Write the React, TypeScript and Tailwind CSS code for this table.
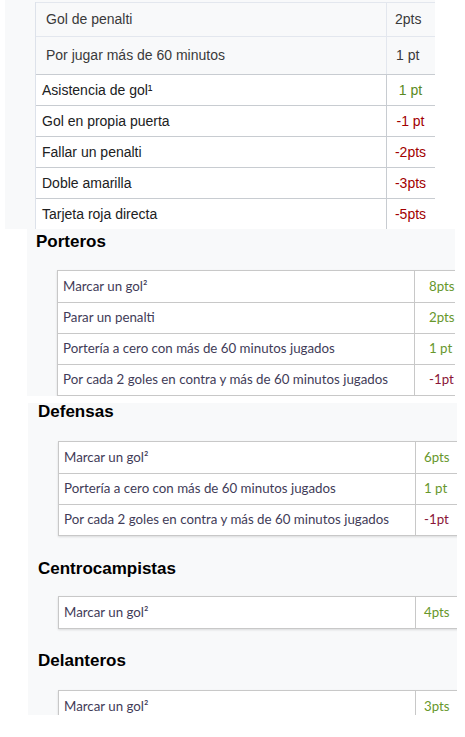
import React from "react";

type Row = { label: React.ReactNode; pts: string; tone?: "plus" | "minus" | "plain" };

const generales: Row[] = [
  { label: "Asistencia de gol¹", pts: "1 pt", tone: "plus" },
  { label: "Gol en propia puerta", pts: "-1 pt", tone: "minus" },
  { label: "Fallar un penalti", pts: "-2pts", tone: "minus" },
  { label: "Doble amarilla", pts: "-3pts", tone: "minus" },
  { label: "Tarjeta roja directa", pts: "-5pts", tone: "minus" },
];

const porteros: Row[] = [
  { label: "Marcar un gol²", pts: "8pts", tone: "plus" },
  { label: "Parar un penalti", pts: "2pts", tone: "plus" },
  { label: "Portería a cero con más de 60 minutos jugados", pts: "1 pt", tone: "plus" },
  { label: "Por cada 2 goles en contra y más de 60 minutos jugados", pts: "-1pt", tone: "minus" },
];

const defensas: Row[] = [
  { label: "Marcar un gol²", pts: "6pts", tone: "plus" },
  { label: "Portería a cero con más de 60 minutos jugados", pts: "1 pt", tone: "plus" },
  { label: "Por cada 2 goles en contra y más de 60 minutos jugados", pts: "-1pt", tone: "minus" },
];

const heading = "text-[17px] leading-[17px] font-bold text-black font-['Liberation_Sans',Arial,sans-serif]";

// Tabla de posiciones (porteros, defensas...)
const PosTable = ({ rows, ptsCol }: { rows: Row[]; ptsCol: string }) => (
  <div className="bg-white border border-[#c8c8c8] shadow-[0_1px_2px_rgba(0,0,0,0.12)] w-[420px] font-['Lato',sans-serif] text-[13.3px]">
    {rows.map((r, i) => (
      <div key={i} className={`flex h-[31px] ${i > 0 ? "border-t border-[#c8c8c8]" : ""}`}>
        <div className="w-[357px] shrink-0 flex items-center pl-[5px] text-[#3f3c58] border-r border-[#c8c8c8]">
          {r.label}
        </div>
        <div
          className={`${ptsCol} flex items-center ${r.tone === "minus" ? "text-[#8a1538]" : "text-[#67972c]"}`}
        >
          {r.pts}
        </div>
      </div>
    ))}
  </div>
);

export default function App() {
  return (
    <div className="w-[465px] h-[737px] bg-white overflow-hidden">
      {/* Puntuación general */}
      <div className="ml-[5px] w-[430px] h-[229px] bg-[#f8f9fa] overflow-hidden pt-[2px] pl-[30px] font-['Liberation_Sans',Arial,sans-serif]">
        <div className="w-[420px] border-l border-[#dde2ea]">
          <div className="flex h-[34px] border-t border-[#e3e7ee] text-[14px] text-[#3a3a3a]">
            <div className="w-[351px] shrink-0 flex items-center pl-[10px] border-r border-[#e3e7ee]">Gol de penalti</div>
            <div className="flex items-center pl-[8px]">2pts</div>
          </div>
          <div className="flex h-[38px] border-t border-[#e3e7ee] text-[14px] text-[#3a3a3a]">
            <div className="w-[351px] shrink-0 flex items-center pl-[10px] border-r border-[#e3e7ee]">Por jugar más de 60 minutos</div>
            <div className="flex items-center pl-[9px]">1 pt</div>
          </div>
          {generales.map((r, i) => (
            <div key={i} className="flex h-[31px] border-t border-[#c8ccd1] bg-white text-[14px] text-[#202122]">
              <div className="w-[351px] shrink-0 flex items-center pl-[6px] border-r border-[#c8ccd1]">{r.label}</div>
              <div
                className={`w-[47px] flex items-center justify-center ${r.tone === "minus" ? "text-[#a20000]" : "text-[#5a8a22]"}`}
              >
                {r.pts}
              </div>
            </div>
          ))}
          <div className="border-t border-[#c8ccd1]" />
        </div>
      </div>

      {/* Porteros */}
      <div className="ml-[27px] w-[428px] h-[167px] bg-[#f8f9fa] overflow-hidden pt-[4px] pl-[9px]">
        <h2 className={heading}>Porteros</h2>
        <div className="mt-[20px] ml-[21px]">
          <PosTable rows={porteros} ptsCol="pl-[14px]" />
        </div>
      </div>

      {/* Defensas, centrocampistas y delanteros */}
      <div className="mt-[7px] ml-[28px] w-[429px] h-[312px] bg-[#f8f9fa] overflow-hidden pl-[10px]">
        <h2 className={heading}>Defensas</h2>
        <div className="mt-[21px] ml-[20px]">
          <PosTable rows={defensas} ptsCol="pl-[8px]" />
        </div>
        <h2 className={`${heading} mt-[24px]`}>Centrocampistas</h2>
        <div className="mt-[19px] ml-[20px]">
          <PosTable rows={[{ label: "Marcar un gol²", pts: "4pts", tone: "plus" }]} ptsCol="pl-[8px]" />
        </div>
        <h2 className={`${heading} mt-[23px]`}>Delanteros</h2>
        <div className="mt-[21px] ml-[20px]">
          <PosTable rows={[{ label: "Marcar un gol²", pts: "3pts", tone: "plus" }]} ptsCol="pl-[8px]" />
        </div>
      </div>
    </div>
  );
}
